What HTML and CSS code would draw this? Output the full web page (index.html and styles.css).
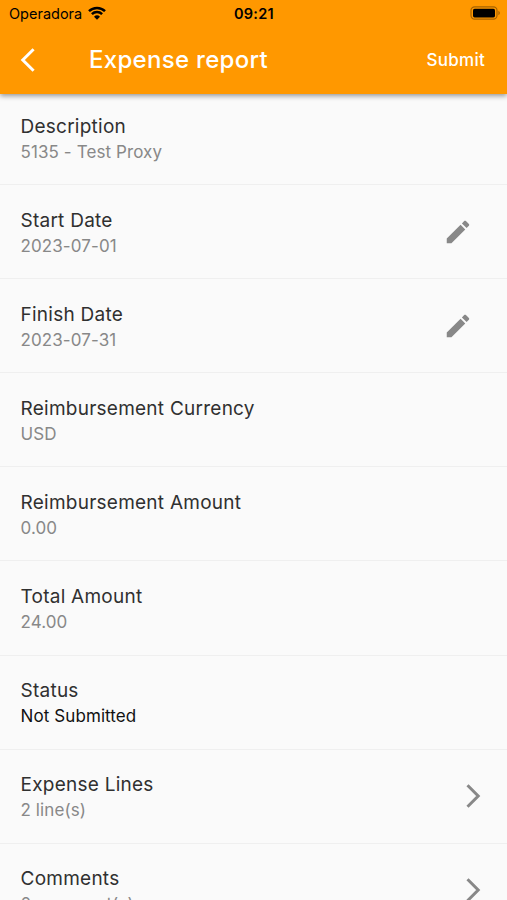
FILE: index.html
```html
<!DOCTYPE html>
<html lang="en">
    <head>
        <meta charset="UTF-8" />
        <meta name="viewport" content="width=device-width, initial-scale=1.0" />
        <title>Expense report</title>
        <link rel="stylesheet" href="styles.css">
    </head>
    <body>
        <header class="header">
            <div class="status-bar">
                <div class="carrier">
                    <span>Operadora</span>
                    <svg class="wifi" viewBox="0 0 18 14">
                        <path d="M1 5.2a11.4 11.4 0 0 1 16 0" />
                        <path d="M3.9 8.1a7.3 7.3 0 0 1 10.2 0" />
                        <path class="wifi-dot" d="M9 13.7L6 10.7a4.3 4.3 0 0 1 6 0z" />
                    </svg>
                </div>
                <span class="clock">09:21</span>
                <svg class="battery" viewBox="0 0 31 14">
                    <rect class="battery-shell" x="1" y="0.8" width="26" height="12.4" rx="3.6" />
                    <rect x="3" y="2.7" width="22" height="8.7" rx="1.6" />
                    <path class="battery-tip" d="M28.4 4.8c2 .8 2 3.6 0 4.4z" />
                </svg>
            </div>
            <div class="nav-bar">
                <svg class="back" viewBox="0 0 16 26">
                    <path d="M13.6 2.3L2.8 13l10.8 10.7" />
                </svg>
                <h1>Expense report</h1>
                <span class="submit">Submit</span>
            </div>
        </header>

        <main class="list">
            <div class="row">
                <div class="row-text">
                    <h2>Description</h2>
                    <p>5135 - Test Proxy</p>
                </div>
            </div>
            <div class="row">
                <div class="row-text">
                    <h2>Start Date</h2>
                    <p>2023-07-01</p>
                </div>
                <svg class="edit" viewBox="0 0 24 24">
                    <path d="M3 17.25V21h3.75L17.81 9.94l-3.75-3.75L3 17.25zM20.71 7.04c.39-.39.39-1.02 0-1.41l-2.34-2.34c-.39-.39-1.02-.39-1.41 0l-1.83 1.83 3.75 3.75 1.83-1.83z" />
                </svg>
            </div>
            <div class="row">
                <div class="row-text">
                    <h2>Finish Date</h2>
                    <p>2023-07-31</p>
                </div>
                <svg class="edit" viewBox="0 0 24 24">
                    <path d="M3 17.25V21h3.75L17.81 9.94l-3.75-3.75L3 17.25zM20.71 7.04c.39-.39.39-1.02 0-1.41l-2.34-2.34c-.39-.39-1.02-.39-1.41 0l-1.83 1.83 3.75 3.75 1.83-1.83z" />
                </svg>
            </div>
            <div class="row">
                <div class="row-text">
                    <h2>Reimbursement Currency</h2>
                    <p>USD</p>
                </div>
            </div>
            <div class="row">
                <div class="row-text">
                    <h2>Reimbursement Amount</h2>
                    <p>0.00</p>
                </div>
            </div>
            <div class="row">
                <div class="row-text">
                    <h2>Total Amount</h2>
                    <p>24.00</p>
                </div>
            </div>
            <div class="row">
                <div class="row-text">
                    <h2>Status</h2>
                    <p class="status">Not Submitted</p>
                </div>
            </div>
            <div class="row">
                <div class="row-text">
                    <h2>Expense Lines</h2>
                    <p>2 line(s)</p>
                </div>
                <svg class="chevron" viewBox="0 0 16 26">
                    <path d="M2.5 2.3L13.2 13 2.5 23.7" />
                </svg>
            </div>
            <div class="row">
                <div class="row-text">
                    <h2>Comments</h2>
                    <p>0 comment(s)</p>
                </div>
                <svg class="chevron" viewBox="0 0 16 26">
                    <path d="M2.5 2.3L13.2 13 2.5 23.7" />
                </svg>
            </div>
        </main>
    </body>
</html>
```
FILE: styles.css
```css
* {
    box-sizing: border-box;
}
body {
    display: flex;
    flex-direction: column;
    height: 100vh;
    margin: 0;
    overflow: hidden;
    background-color: #fafafa;
    font-family: Inter, "Liberation Sans", sans-serif;
}
h1,
h2,
p {
    margin: 0;
    font-weight: 400;
}
svg {
    display: block;
    flex: none;
}
.header {
    flex: none;
    z-index: 1;
    height: 94px;
    background-color: #ff9800;
    box-shadow: 0 2px 5px rgba(0, 0, 0, 0.4);
}
.status-bar {
    display: grid;
    grid-template-columns: 1fr auto 1fr;
    align-items: center;
    height: 26px;
    padding: 1px 8px 0 9px;
}
.carrier {
    display: flex;
    align-items: center;
    gap: 6px;
    font-size: 14.5px;
}
.wifi {
    width: 18px;
    height: 14px;
    margin-top: -2px;
    fill: none;
    stroke: #000;
    stroke-width: 2.5;
}
.wifi-dot {
    fill: #000;
    stroke: none;
}
.clock {
    font-size: 14.5px;
    font-weight: 600;
    letter-spacing: 0.3px;
}
.battery {
    justify-self: end;
    width: 31px;
    height: 14px;
    margin-top: -1px;
    margin-right: -2px;
}
.battery-shell {
    fill: none;
    stroke: #a66300;
    stroke-width: 1.2;
}
.battery-tip {
    fill: #a66300;
}
.nav-bar {
    display: flex;
    align-items: center;
    height: 67px;
    padding: 0 22px 0 20px;
    color: #fff;
}
.back {
    width: 16px;
    height: 26px;
    fill: none;
    stroke: #fff;
    stroke-width: 3;
}
.nav-bar h1 {
    flex: 1;
    margin-left: 53px;
    font-size: 24px;
    font-weight: 450;
    letter-spacing: 0.3px;
}
.submit {
    font-size: 17px;
    font-weight: 450;
    letter-spacing: 0.25px;
}
.list {
    flex: 1;
    min-height: 0;
    margin-top: -3px;
}
.row {
    display: flex;
    align-items: center;
    justify-content: space-between;
    height: 94.1px;
    padding: 0 26.5px 0 20.5px;
    border-bottom: 1px solid #efefef;
}
.row-text {
    padding-top: 2px;
}
.row h2 {
    color: #303030;
    font-size: 19px;
    line-height: 26px;
    letter-spacing: 0.25px;
}
.row p {
    color: #888;
    font-size: 17px;
    line-height: 24px;
    letter-spacing: 0.1px;
}
.row .status {
    color: #111;
}
.edit {
    width: 30px;
    height: 30px;
    margin-right: 7.5px;
    fill: #888;
}
.chevron {
    width: 16px;
    height: 26px;
    fill: none;
    stroke: #888;
    stroke-width: 3;
}
```
